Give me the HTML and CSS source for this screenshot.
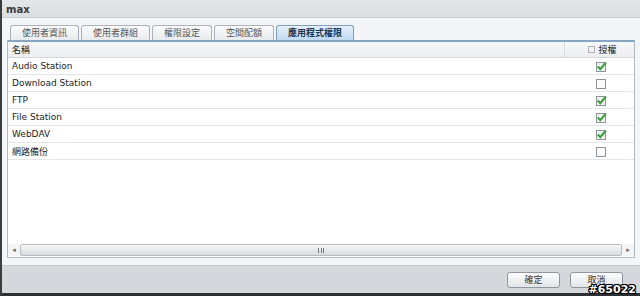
FILE: index.html
```html
<!DOCTYPE html>
<html lang="zh-Hant">
<head>
    <meta charset="UTF-8">
    <title>max</title>
    <link rel="stylesheet" href="styles.css">
</head>
<body>
    <div class="window">
        <div class="titlebar">max</div>

        <div class="content">
            <div class="tabs">
                <div class="tab">使用者資訊</div>
                <div class="tab">使用者群組</div>
                <div class="tab">權限設定</div>
                <div class="tab">空間配額</div>
                <div class="tab active">應用程式權限</div>
            </div>

            <div class="panel">
                <div class="grid-head">
                    <div class="col-name">名稱</div>
                    <div class="col-auth"><span class="mini-box"></span>授權</div>
                </div>
                <div class="rows" id="rows">
                    <!-- rows are added by the script -->
                </div>
                <div class="hscroll">
                    <div class="arrow">&#9666;</div>
                    <div class="thumb"><span class="grip"></span></div>
                    <div class="arrow">&#9656;</div>
                </div>
            </div>
        </div>

        <div class="footer">
            <button class="btn">確定</button>
            <button class="btn">取消</button>
        </div>
        <div class="bottom-edge"></div>

        <div class="watermark">#65022</div>
    </div>

    <script>
        // Application list and whether access is granted
        const apps = [
            { name: 'Audio Station', allowed: true },
            { name: 'Download Station', allowed: false },
            { name: 'FTP', allowed: true },
            { name: 'File Station', allowed: true },
            { name: 'WebDAV', allowed: true },
            { name: '網路備份', allowed: false }
        ];

        const checkedIcon = '<svg width="11" height="11" viewBox="0 0 11 11">' +
            '<rect x="0.5" y="1.5" width="9" height="9" fill="#eef3ee" stroke="#8c9399"/>' +
            '<path d="M1.8 5.6 L4.3 8.2 L9.8 1.6" fill="none" stroke="#3f9e3f" stroke-width="2.2"/>' +
            '</svg>';
        const emptyIcon = '<svg width="11" height="11" viewBox="0 0 11 11">' +
            '<rect x="0.5" y="1.5" width="9" height="9" fill="#fbfbfb" stroke="#8c9399"/>' +
            '</svg>';

        const rowsEl = document.getElementById('rows');

        apps.forEach(app => {
            const row = document.createElement('div');
            row.className = 'row';

            const name = document.createElement('div');
            name.className = 'col-name';
            name.textContent = app.name;

            const auth = document.createElement('div');
            auth.className = 'col-auth';
            auth.innerHTML = app.allowed ? checkedIcon : emptyIcon;

            row.appendChild(name);
            row.appendChild(auth);
            rowsEl.appendChild(row);
        });
    </script>
</body>
</html>
```

FILE: styles.css
```css
* {
    margin: 0;
    padding: 0;
    box-sizing: border-box;
}

body {
    width: 640px;
    height: 296px;
    overflow: hidden;
    font-family: "DejaVu Sans", "Noto Sans CJK TC", sans-serif;
    font-size: 9px;
    color: #222;
}

.window {
    position: relative;
    width: 640px;
    height: 296px;
    display: flex;
    flex-direction: column;
    background-color: #f3f5f7;
    border-left: 2px solid #3a3d40;
}

.titlebar {
    height: 18px;
    line-height: 19px;
    padding-left: 4px;
    font-weight: bold;
    font-size: 10px;
    color: #3a3a3a;
    background: linear-gradient(#e4e7ea, #d9dde1);
    border-bottom: 1px solid #c9ced3;
}

.content {
    flex: 1;
    display: flex;
    flex-direction: column;
    padding: 7px 5px 7px 5px;
}

.tabs {
    display: flex;
    gap: 2px;
    padding-left: 3px;
    height: 15px;
}

.tab {
    height: 15px;
    line-height: 14px;
    padding: 0 11px;
    font-family: "Noto Sans CJK TC", sans-serif;
    font-size: 9px;
    color: #555;
    background: linear-gradient(#fbfbfc, #e8ebee);
    border: 1px solid #aab1b8;
    border-bottom: none;
    border-radius: 3px 3px 0 0;
}

.tab.active {
    padding: 0 11px;
    font-weight: bold;
    color: #1d3553;
    background: linear-gradient(#e6f1fb, #bfd9ef);
    border-color: #7c9fbd;
}

.panel {
    flex: 1;
    display: flex;
    flex-direction: column;
    background-color: #fff;
    border: 1px solid #b3bac1;
    border-top: 2px solid #86a6c1;
    width: 628px;
}

.grid-head,
.row {
    display: flex;
    height: 17px;
    align-items: center;
    border-bottom: 1px solid #e4e7ea;
}

.grid-head {
    height: 16px;
    background: linear-gradient(#f7f8f9, #eceef0);
    border-bottom: 1px solid #d3d7db;
    font-family: "Noto Sans CJK TC", sans-serif;
}

.col-name {
    flex: 1;
    padding-left: 4px;
}

.row .col-name {
    font-family: "DejaVu Sans", "Noto Sans CJK TC", sans-serif;
}

.col-auth {
    width: 70px;
    height: 100%;
    display: flex;
    align-items: center;
    justify-content: center;
}

.grid-head .col-auth {
    border-left: 1px solid #d8dcdf;
    padding-left: 6px;
    gap: 3px;
}

.mini-box {
    display: inline-block;
    width: 7px;
    height: 7px;
    border: 1px solid #a9afb5;
    background-color: #f4f4f4;
}

.row .col-auth svg {
    display: block;
    margin-left: 4px;
}

.rows {
    flex: 1;
}

.hscroll {
    display: flex;
    height: 12px;
    margin: 0 0 1px 0;
}

.arrow {
    width: 12px;
    font-size: 7px;
    line-height: 12px;
    text-align: center;
    color: #666;
    background-color: #f4f5f6;
}

.thumb {
    flex: 1;
    display: flex;
    justify-content: center;
    align-items: center;
    background: linear-gradient(#f6f7f8, #d8dbde);
    border: 1px solid #b5bbc0;
    border-radius: 2px;
}

.grip {
    width: 6px;
    height: 5px;
    border-left: 1px solid #777;
    border-right: 1px solid #777;
    background: linear-gradient(to right, transparent 2px, #777 2px, #777 3px, transparent 3px);
}

.footer {
    height: 28px;
    display: flex;
    justify-content: flex-end;
    align-items: center;
    gap: 10px;
    padding-right: 17px;
    background-color: #d4d8dc;
    border-top: 1px solid #c6cbd0;
}

.btn {
    width: 53px;
    height: 16px;
    font-family: "Noto Sans CJK TC", sans-serif;
    font-size: 9px;
    color: #333;
    background: linear-gradient(#fdfdfd, #e2e5e8);
    border: 1px solid #8f969d;
    border-radius: 3px;
}

.bottom-edge {
    height: 3px;
    background-color: #2e3134;
}

.watermark {
    position: absolute;
    right: 4px;
    bottom: 0;
    font-family: "DejaVu Sans", sans-serif;
    font-weight: bold;
    font-size: 11px;
    line-height: 12px;
    color: #fff;
    text-shadow: -1px 0 #000, 1px 0 #000, 0 -1px #000, 0 1px #000,
                 -1px -1px #000, 1px 1px #000, -1px 1px #000, 1px -1px #000;
}
```
